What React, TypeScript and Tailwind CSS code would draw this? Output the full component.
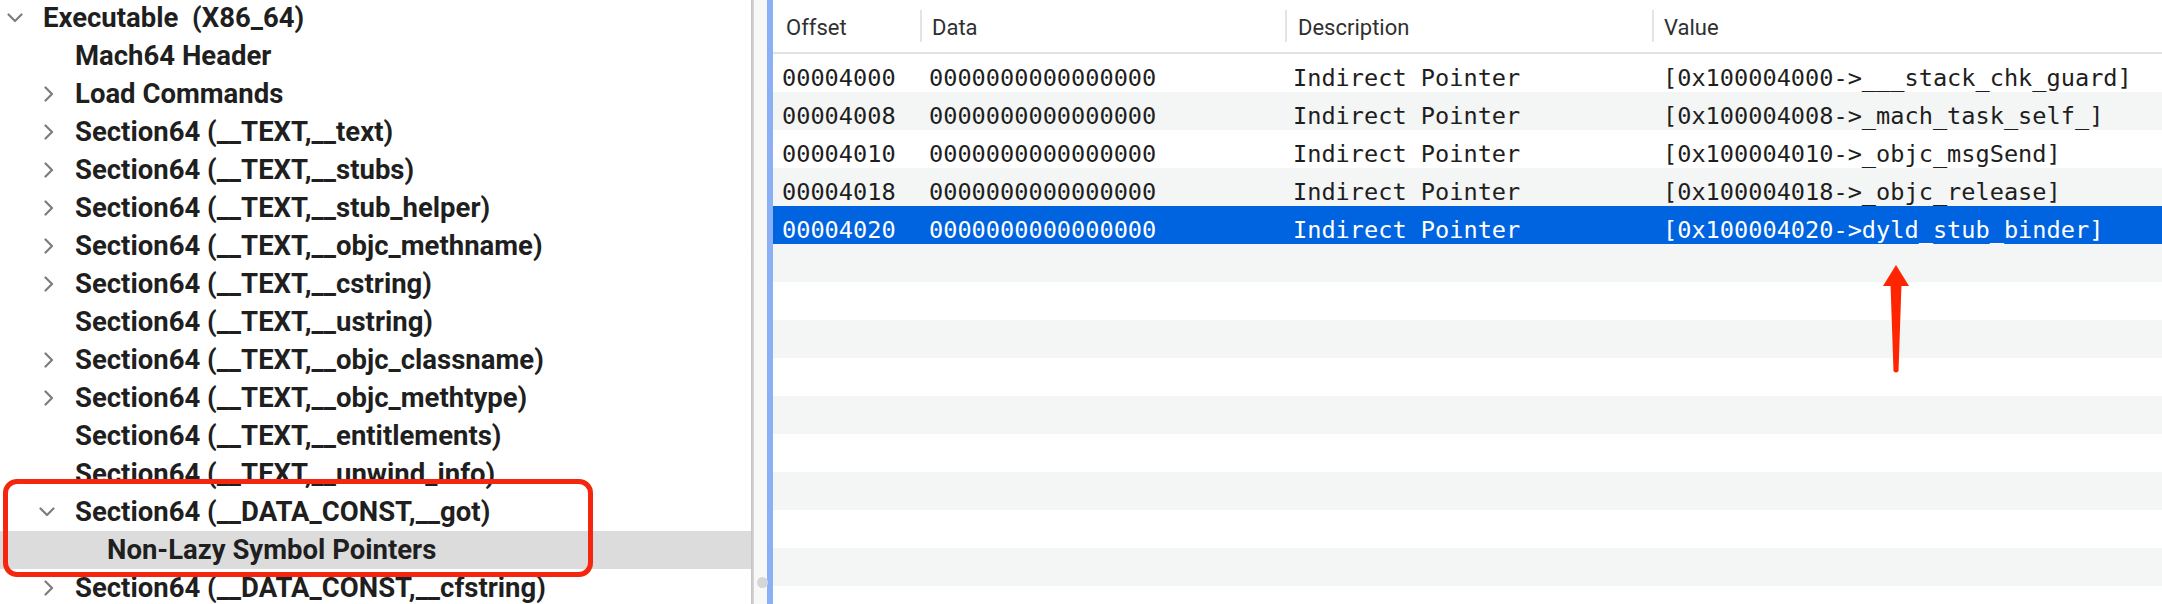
import React from "react";

type Node = { level: 0 | 1 | 2; label: string; chev: "down" | "right" | "none"; selected?: boolean };

const tree: Node[] = [
  { level: 0, label: "Executable  (X86_64)", chev: "down" },
  { level: 1, label: "Mach64 Header", chev: "none" },
  { level: 1, label: "Load Commands", chev: "right" },
  { level: 1, label: "Section64 (__TEXT,__text)", chev: "right" },
  { level: 1, label: "Section64 (__TEXT,__stubs)", chev: "right" },
  { level: 1, label: "Section64 (__TEXT,__stub_helper)", chev: "right" },
  { level: 1, label: "Section64 (__TEXT,__objc_methname)", chev: "right" },
  { level: 1, label: "Section64 (__TEXT,__cstring)", chev: "right" },
  { level: 1, label: "Section64 (__TEXT,__ustring)", chev: "none" },
  { level: 1, label: "Section64 (__TEXT,__objc_classname)", chev: "right" },
  { level: 1, label: "Section64 (__TEXT,__objc_methtype)", chev: "right" },
  { level: 1, label: "Section64 (__TEXT,__entitlements)", chev: "none" },
  { level: 1, label: "Section64 (__TEXT,__unwind_info)", chev: "none" },
  { level: 1, label: "Section64 (__DATA_CONST,__got)", chev: "down" },
  { level: 2, label: "Non-Lazy Symbol Pointers", chev: "none", selected: true },
  { level: 1, label: "Section64 (__DATA_CONST,__cfstring)", chev: "right" },
];

const indent: Record<number, string> = { 0: "pl-0", 1: "pl-[32px]", 2: "pl-[64px]" };

const rows = [
  ["00004000", "0000000000000000", "Indirect Pointer", "[0x100004000->___stack_chk_guard]"],
  ["00004008", "0000000000000000", "Indirect Pointer", "[0x100004008->_mach_task_self_]"],
  ["00004010", "0000000000000000", "Indirect Pointer", "[0x100004010->_objc_msgSend]"],
  ["00004018", "0000000000000000", "Indirect Pointer", "[0x100004018->_objc_release]"],
  ["00004020", "0000000000000000", "Indirect Pointer", "[0x100004020->dyld_stub_binder]"],
];

function ChevDown() {
  return (
    <svg width="16" height="10" viewBox="0 0 16 10" fill="none">
      <path d="M1.5 1.5 L8 8 L14.5 1.5" stroke="#7d7d7d" strokeWidth="2.2" strokeLinecap="round" strokeLinejoin="round" />
    </svg>
  );
}

function ChevRight() {
  return (
    <svg width="10" height="16" viewBox="0 0 10 16" fill="none" className="ml-[3px]">
      <path d="M1.5 1.5 L8 8 L1.5 14.5" stroke="#7d7d7d" strokeWidth="2.2" strokeLinecap="round" strokeLinejoin="round" />
    </svg>
  );
}

const cellPad = ["pl-[9px]", "pl-[9px]", "pl-[8px]", "pl-[11px]"];

export default function App() {
  const fillerCount = 10;
  return (
    <div className="w-[2162px] h-[604px] flex overflow-hidden bg-white relative">
      {/* Left outline */}
      <div className="w-[751px] shrink-0 relative overflow-hidden bg-white">
        <div className="mt-[-1px] flex flex-col">
          {tree.map((n, i) => (
            <div
              key={i}
              className={`h-[38px] shrink-0 flex items-center ${indent[n.level]} ${n.selected ? "bg-[#dcdcdc]" : ""}`}
            >
              <div className="w-[30px] flex justify-center items-center">
                {n.chev === "down" ? <ChevDown /> : n.chev === "right" ? <ChevRight /> : null}
              </div>
              <span className="ml-[13px] whitespace-pre font-['Roboto',sans-serif] font-bold text-[27.5px] text-[#1f1f1f] leading-none">
                {n.label}
              </span>
            </div>
          ))}
        </div>
        {/* red annotation box */}
        <div className="absolute left-[3px] top-[479px] w-[590px] h-[98px] border-[5px] border-[#f5260f] rounded-[14px]" />
      </div>

      {/* Divider */}
      <div className="w-[3px] shrink-0 bg-gradient-to-r from-[#c2c2c2] to-[#d8d8d8]" />
      <div className="w-[13px] shrink-0 bg-[#f8f8f8] relative">
        <div className="absolute left-[3px] top-[577px] w-[11px] h-[11px] rounded-full bg-[#d6d6d6]" />
      </div>
      <div className="w-[6px] shrink-0 bg-[#8bb0f6]" />

      {/* Right table */}
      <div className="flex-1 flex flex-col relative overflow-hidden">
        <div className="h-[52px] shrink-0 grid grid-cols-[147px_365px_367px_1fr] font-['Roboto',sans-serif] text-[22px] text-[#303030]">
          <div className="flex items-center pl-[13px] pt-[2px]">Offset</div>
          <div className="flex items-center">
            <div className="w-[2px] h-[32px] bg-[#e4e4e4]" />
            <span className="ml-[10px] pt-[2px]">Data</span>
          </div>
          <div className="flex items-center">
            <div className="w-[2px] h-[32px] bg-[#e4e4e4]" />
            <span className="ml-[11px] pt-[2px]">Description</span>
          </div>
          <div className="flex items-center">
            <div className="w-[2px] h-[32px] bg-[#e4e4e4]" />
            <span className="ml-[10px] pt-[2px]">Value</span>
          </div>
        </div>
        <div className="h-[2px] shrink-0 bg-[#e2e2e2]" />
        <div className="flex flex-col shrink-0 font-['DejaVu_Sans_Mono',monospace] text-[23.6px]">
          {rows.map((r, i) => {
            const sel = i === 4;
            const bg = sel ? "bg-[#0064e1] text-white" : i % 2 === 1 ? "bg-[#f4f5f5] text-[#1e1e1e]" : "bg-white text-[#1e1e1e]";
            return (
              <div key={i} className={`h-[38px] shrink-0 grid grid-cols-[147px_365px_367px_1fr] items-center ${bg}`}>
                {r.map((c, j) => (
                  <div key={j} className={`${cellPad[j]} whitespace-pre leading-none pt-[11px]`}>
                    {c}
                  </div>
                ))}
              </div>
            );
          })}
          {Array.from({ length: fillerCount }).map((_, k) => {
            const i = k + 5;
            return <div key={i} className={`h-[38px] shrink-0 ${i % 2 === 1 ? "bg-[#f4f5f5]" : "bg-white"}`} />;
          })}
        </div>

        {/* red arrow */}
        <svg className="absolute left-[1107px] top-[262px]" width="32" height="114" viewBox="0 0 32 114">
          <polygon points="16,3 3,24 29,24" fill="#ff2500" />
          <path d="M10.5 22 L21.5 22 L18.5 109 Q16 112 13.5 109 Z" fill="#ff2500" />
        </svg>
      </div>
    </div>
  );
}
